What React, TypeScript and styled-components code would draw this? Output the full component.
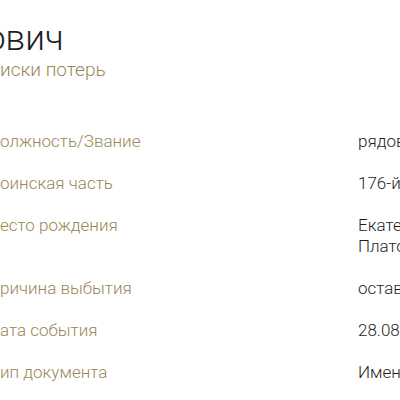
import React from "react";
import styled, { createGlobalStyle } from "styled-components";

const Global = createGlobalStyle`
  html, body {
    margin: 0;
    padding: 0;
    background: #ffffff;
    overflow: hidden;
  }
  body {
    font-family: Roboto, "Noto Sans", sans-serif;
    font-stretch: 90%;
    font-weight: 360;
  }
`;

const Page = styled.div`
  width: 400px;
  height: 400px;
  overflow: hidden;
  padding-top: 19px;
  box-sizing: border-box;
`;

const Header = styled.div`
  display: flex;
  flex-direction: column;
  margin-bottom: 50px;
`;

const Title = styled.h1`
  margin: 0;
  font-size: 35px;
  font-weight: 360;
  font-stretch: 92%;
  line-height: 39px;
  color: #1f1f1f;
  white-space: nowrap;
  text-indent: -14px;
`;

const Subtitle = styled.div`
  margin-top: 1px;
  font-size: 19px;
  line-height: 22px;
  font-stretch: 97%;
  color: #988757;
  white-space: nowrap;
`;

const Table = styled.div`
  display: flex;
  flex-direction: column;
  gap: 21px;
`;

const Row = styled.div`
  display: grid;
  grid-template-columns: 358px 1fr;
  font-size: 17px;
  line-height: 21px;
`;

const Label = styled.div`
  color: #988757;
  white-space: nowrap;
`;

const Value = styled.div`
  color: #1f1f1f;
  white-space: nowrap;
  overflow: hidden;
`;

const rows: { label: string; value: string[] }[] = [
  { label: "олжность/Звание", value: ["рядовой"] },
  { label: "оинская часть", value: ["176-й стрелковый полк"] },
  { label: "есто рождения", value: ["Екатеринославская губ.", "Платоновка"] },
  { label: "ричина выбытия", value: ["оставлен на поле боя"] },
  { label: "ата события", value: ["28.08.1942"] },
  { label: "ип документа", value: ["Именной список"] },
];

export default function App() {
  return (
    <Page>
      <Global />
      <Header>
        <Title>ович</Title>
        <Subtitle>иски потерь</Subtitle>
      </Header>
      <Table>
        {rows.map((r) => (
          <Row key={r.label}>
            <Label>{r.label}</Label>
            <Value>
              {r.value.map((v) => (
                <div key={v}>{v}</div>
              ))}
            </Value>
          </Row>
        ))}
      </Table>
    </Page>
  );
}
